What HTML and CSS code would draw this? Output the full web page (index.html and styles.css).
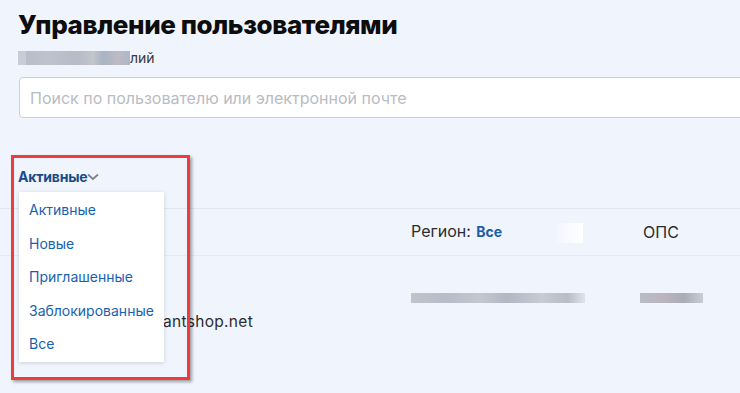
FILE: index.html
```html
<!DOCTYPE html>
<html lang="ru">

<head>
    <meta charset="UTF-8">
    <meta name="viewport" content="width=device-width, initial-scale=1.0">
    <title>Управление пользователями</title>
    <link rel="stylesheet" href="styles.css">
</head>

<body>
    <div class="page">
        <h1 class="title">Управление пользователями</h1>
        <p class="subtitle"><span class="blur blur-sub"></span>лий</p>

        <div class="search">
            <input type="text" placeholder="Поиск по пользователю или электронной почте">
        </div>

        <div class="filter">
            <span class="filter-label">Активные</span>
            <svg class="chevron" width="12" height="8" viewBox="0 0 12 8">
                <path d="M1 1.5 L6 6 L11 1.5" fill="none" stroke="#7d838e" stroke-width="1.7" />
            </svg>
        </div>

        <div class="table">
            <div class="row head">
                <div class="cell"></div>
                <div class="cell region">Регион: <b>Все</b><span class="blur blur-white"></span></div>
                <div class="cell">ОПС</div>
            </div>
            <div class="row body">
                <div class="cell email">ivanov.p@giantshop.net</div>
                <div class="cell"><span class="blur blur-addr"></span></div>
                <div class="cell"><span class="blur blur-ops"></span></div>
            </div>
        </div>

        <!-- dropdown opened from filter -->
        <ul class="dropdown">
            <li>Активные</li>
            <li>Новые</li>
            <li>Приглашенные</li>
            <li>Заблокированные</li>
            <li>Все</li>
        </ul>

        <!-- annotation frame -->
        <div class="mark"></div>
    </div>
</body>

</html>
```

FILE: styles.css
```css
* {
    padding: 0;
    margin: 0;
    box-sizing: border-box;
    font-family: "Inter", "Noto Sans", sans-serif;
}

body {
    background-color: #eff4fd;
    overflow: hidden;
    width: 740px;
    height: 393px;
}

.page {
    position: relative;
    padding: 9px 0 0 18px;
    height: 393px;
}

.title {
    font-size: 26px;
    font-weight: 800;
    color: #0d0d0d;
    letter-spacing: -0.4px;
    line-height: 32px;
}

.subtitle {
    margin-top: 8px;
    font-size: 14px;
    color: #3a3a3a;
    line-height: 18px;
    display: flex;
    align-items: center;
}

.blur {
    display: inline-block;
}

.blur-sub {
    width: 112px;
    height: 14px;
    background: linear-gradient(to right, #c9ccd6 0, #c9ccd6 8px, #b9bdc9 8px, #bfc2cc 30px, #b6bbc8 60px, #c4c5cd 75px, #a9b3c3 85px, #bdbbc4 100px, #aeb6c8 112px);
}

.search {
    margin-top: 10px;
    margin-left: 1px;
}

.search input {
    width: 760px;
    height: 41px;
    border: 1px solid #cfcfcf;
    border-radius: 4px;
    background-color: #ffffff;
    padding: 0 10px;
    font-size: 16px;
    font-family: "Inter", sans-serif;
    color: #333;
    outline: none;
}

.search input::placeholder {
    color: #b9bcc2;
}

.filter {
    margin-top: 49px;
    display: flex;
    align-items: center;
    height: 18px;
}

.filter-label {
    font-size: 14px;
    font-weight: 700;
    color: #1b4a86;
    letter-spacing: -0.2px;
}

.chevron {
    margin-top: 1px;
}

.table {
    margin-top: 23px;
    margin-left: -18px;
}

.row {
    display: grid;
    grid-template-columns: 411px 232px 1fr;
}

.row.head {
    height: 48px;
    border-top: 1px solid #e0e5ef;
    border-bottom: 1px solid #e6e9ef;
    align-items: center;
    font-size: 16px;
    color: #2c2c2c;
}

.region b {
    color: #1a5fa8;
    font-size: 14px;
    margin-left: 1px;
}

.blur-white {
    width: 26px;
    height: 20px;
    margin-left: 55px;
    vertical-align: middle;
    background: linear-gradient(to right, #f3f6fd, #ffffff);
}

.row.body {
    height: 100px;
    padding-top: 31px;
}

.email {
    padding-top: 25px;
    font-size: 15.5px;
    letter-spacing: 0.3px;
    color: #2c2c2c;
    text-align: right;
    padding-right: 158px;
}

.blur-addr {
    width: 174px;
    height: 10px;
    background: linear-gradient(to right, #c2c3cb 0, #b6bcc8 20%, #c3c7d1 40%, #b2b7c3 55%, #c8cad4 75%, #b9bdc7 90%, #dfe3ec 100%);
}

.blur-ops {
    width: 63px;
    height: 10px;
    margin-left: -3px;
    background: linear-gradient(to right, #b9bcc6, #bab4bd 40%, #a9adb8 70%, #c9cdd8);
}

.dropdown {
    position: absolute;
    left: 19px;
    top: 192px;
    width: 145px;
    list-style: none;
    background-color: #ffffff;
    box-shadow: 0 1px 4px rgba(0, 0, 0, 0.15);
    padding: 1px 0 1px;
}

.dropdown li {
    font-size: 14px;
    color: #1762b0;
    padding: 0 10px;
    line-height: 33.5px;
}

.mark {
    position: absolute;
    left: 11px;
    top: 155px;
    width: 179px;
    height: 225px;
    border: 3px solid #f23a3a;
    box-shadow: 2px 2px 3px rgba(0, 0, 0, 0.35);
}
```
